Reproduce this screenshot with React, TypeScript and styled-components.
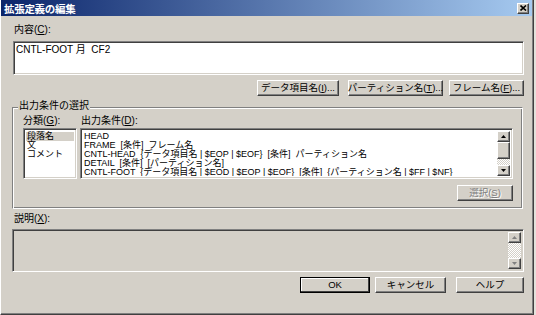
import React from 'react'
import styled, { createGlobalStyle, css } from 'styled-components'

const GlobalStyle = createGlobalStyle`
  html, body {
    margin: 0;
    padding: 0;
    background: #e4e2dc;
  }
  body {
    font-family: "Liberation Sans", "Noto Sans CJK JP", sans-serif;
    font-size: 10px;
    color: #000;
  }
  u {
    text-decoration: underline;
    text-underline-offset: 1px;
  }
`

const raised = css`
  box-sizing: border-box;
  background: #d4d0c8;
  border-top: 1px solid #fff;
  border-left: 1px solid #fff;
  border-right: 1px solid #404040;
  border-bottom: 1px solid #404040;
  box-shadow: inset -1px -1px #808080;
`

const sunken = css`
  box-sizing: border-box;
  border-top: 1px solid #808080;
  border-left: 1px solid #808080;
  border-right: 1px solid #fff;
  border-bottom: 1px solid #fff;
  box-shadow: inset 1px 1px #404040, inset -1px -1px #d4d0c8;
`

const Window = styled.div`
  width: 534px;
  height: 315px;
  box-sizing: border-box;
  background: #d4d0c8;
  border-left: 1px solid #fff;
  border-right: 1px solid #404040;
  border-bottom: 1px solid #404040;
  box-shadow: inset -1px -1px #808080;
  display: flex;
  flex-direction: column;
`

const TitleBar = styled.div`
  height: 16px;
  margin-right: 1px;
  display: flex;
  align-items: center;
  padding: 0 3px 0 3px;
  background: linear-gradient(to right, #0a246a, #a6caf0);
`

const TitleText = styled.span`
  color: #fff;
  font-weight: bold;
  font-size: 10.5px;
  letter-spacing: -0.3px;
`

const CloseButton = styled.div`
  ${raised};
  margin-left: auto;
  width: 12px;
  height: 11px;
  display: flex;
  align-items: center;
  justify-content: center;
`

const Content = styled.div`
  flex: 1;
  display: flex;
  flex-direction: column;
  padding: 0 9px 0 11px;
`

const Label = styled.div<{ $mt?: number; $ml?: number }>`
  line-height: 10px;
  margin-top: ${({ $mt }) => ($mt ?? 0) + 'px'};
  margin-left: ${({ $ml }) => ($ml ?? 0) + 'px'};
  white-space: nowrap;
`

const TextBox = styled.div`
  ${sunken};
  background: #fff;
  height: 34px;
  margin-top: 6px;
  margin-left: 1px;
  padding: 3px 2px;
  line-height: 10px;
  white-space: pre;
`

const ButtonRow = styled.div<{ $mt: number }>`
  display: flex;
  justify-content: flex-end;
  margin-top: ${({ $mt }) => $mt + 'px'};
`

const Button = styled.div<{ $w: number; $ml?: number; $default?: boolean; $disabled?: boolean }>`
  ${raised};
  width: ${({ $w }) => $w + 'px'};
  height: 16px;
  margin-left: ${({ $ml }) => ($ml ?? 0) + 'px'};
  display: flex;
  align-items: center;
  justify-content: center;
  white-space: nowrap;
  font-size: 9.5px;
  line-height: 10px;
  ${({ $default }) =>
    $default &&
    css`
      outline: 1px solid #000;
      outline-offset: -1px;
      border-right-color: #000;
      border-bottom-color: #000;
      box-shadow: inset -1px -1px #404040, inset 1px 1px #fff;
    `}
  ${({ $disabled }) =>
    $disabled &&
    css`
      color: #808080;
      text-shadow: 1px 1px #fff;
    `}
`

const GroupBox = styled.div`
  position: relative;
  margin-top: 11px;
  margin-right: 1px;
  box-sizing: border-box;
  border-top: 1px solid #808080;
  border-left: 1px solid #808080;
  border-right: 1px solid #fff;
  border-bottom: 1px solid #fff;
  box-shadow: inset 1px 1px #fff, inset -1px -1px #808080;
  padding: 8px 9px 7px 10px;
`

const Legend = styled.span`
  position: absolute;
  top: -8px;
  left: 5px;
  padding: 0 1px;
  background: #d4d0c8;
  line-height: 12px;
  white-space: nowrap;
`

const SelectGrid = styled.div`
  display: grid;
  grid-template-columns: 54px 1fr;
  grid-template-rows: 10px 51px;
  column-gap: 3px;
  row-gap: 2px;
`

const ListBox = styled.div`
  ${sunken};
  background: #fff;
  display: flex;
  padding: 2px;
  overflow: hidden;
`

const ListBody = styled.div`
  flex: 1;
  min-width: 0;
  overflow: hidden;
  padding-top: 0.5px;
`

const ListItem = styled.div<{ $selected?: boolean }>`
  line-height: 9.2px;
  height: 9.2px;
  padding: 0 1px;
  white-space: pre;
  font-size: 9px;
  ${({ $selected }) =>
    $selected &&
    css`
      background: #d4d0c8;
    `}
`

const DescBox = styled.div`
  ${sunken};
  height: 43px;
  margin-top: 5px;
  display: flex;
  justify-content: flex-end;
  padding: 2px;
`

const Scrollbar = styled.div`
  width: 13px;
  display: flex;
  flex-direction: column;
`

const ScrollArrow = styled.div`
  ${raised};
  height: 11px;
  display: flex;
  align-items: center;
  justify-content: center;
`

const Thumb = styled.div<{ $h: number }>`
  ${raised};
  height: ${({ $h }) => $h + 'px'};
`

const Track = styled.div`
  flex: 1;
  background: repeating-conic-gradient(#fff 0 25%, #d4d0c8 0 50%) 0 0 / 2px 2px;
`

function Arrow({ up, disabled }: { up?: boolean; disabled?: boolean }) {
  return (
    <svg width="5" height="3" viewBox="0 0 5 3">
      <polygon points={up ? '2.5,0 5,3 0,3' : '0,0 5,0 2.5,3'} fill={disabled ? '#808080' : '#000'} />
    </svg>
  )
}

const listItems = [
  'HEAD',
  'FRAME  [条件]  フレーム名',
  'CNTL-HEAD  {データ項目名 | $EOP | $EOF}  [条件]  パーティション名',
  'DETAIL  [条件]  [パーティション名]',
  'CNTL-FOOT  {データ項目名 | $EOD | $EOP | $EOF}  [条件]  {パーティション名 | $FF | $NF}',
]

export default function App() {
  return (
    <>
      <GlobalStyle />
      <Window>
        <TitleBar>
          <TitleText>拡張定義の編集</TitleText>
          <CloseButton>
            <svg width="7" height="6" viewBox="0 0 7 6">
              <path d="M0.5 0.5 L6 5.5 M6 0.5 L0.5 5.5" stroke="#000" strokeWidth="1.6" />
            </svg>
          </CloseButton>
        </TitleBar>
        <Content>
          <Label $mt={9} $ml={2}>
            内容(<u>C</u>):
          </Label>
          <TextBox>{'CNTL-FOOT 月  CF2'}</TextBox>
          <ButtonRow $mt={5}>
            <Button $w={82}>
              データ項目名(<u>I</u>)...
            </Button>
            <Button $w={95} $ml={9}>
              パーティション名(<u>T</u>)...
            </Button>
            <Button $w={75} $ml={6}>
              フレーム名(<u>F</u>)...
            </Button>
          </ButtonRow>

          <GroupBox>
            <Legend>出力条件の選択</Legend>
            <SelectGrid>
              <Label>
                分類(<u>G</u>):
              </Label>
              <Label $ml={1}>
                出力条件(<u>D</u>):
              </Label>
              <ListBox>
                <ListBody>
                  <ListItem $selected>段落名</ListItem>
                  <ListItem>文</ListItem>
                  <ListItem>コメント</ListItem>
                </ListBody>
              </ListBox>
              <ListBox>
                <ListBody>
                  {listItems.map((t) => (
                    <ListItem key={t}>{t}</ListItem>
                  ))}
                </ListBody>
                <Scrollbar>
                  <ScrollArrow>
                    <Arrow up />
                  </ScrollArrow>
                  <Thumb $h={17} />
                  <Track />
                  <ScrollArrow>
                    <Arrow />
                  </ScrollArrow>
                </Scrollbar>
              </ListBox>
            </SelectGrid>
            <ButtonRow $mt={6}>
              <Button $w={56} $disabled>
                選択(<u>S</u>)
              </Button>
            </ButtonRow>
          </GroupBox>

          <Label $mt={5} $ml={2}>
            説明(<u>X</u>):
          </Label>
          <DescBox>
            <Scrollbar>
              <ScrollArrow>
                <Arrow up disabled />
              </ScrollArrow>
              <Track />
              <ScrollArrow>
                <Arrow disabled />
              </ScrollArrow>
            </Scrollbar>
          </DescBox>
          <ButtonRow $mt={5}>
            <Button $w={70} $default>
              OK
            </Button>
            <Button $w={71} $ml={5}>
              キャンセル
            </Button>
            <Button $w={68} $ml={10}>
              ヘルプ
            </Button>
          </ButtonRow>
        </Content>
      </Window>
    </>
  )
}
